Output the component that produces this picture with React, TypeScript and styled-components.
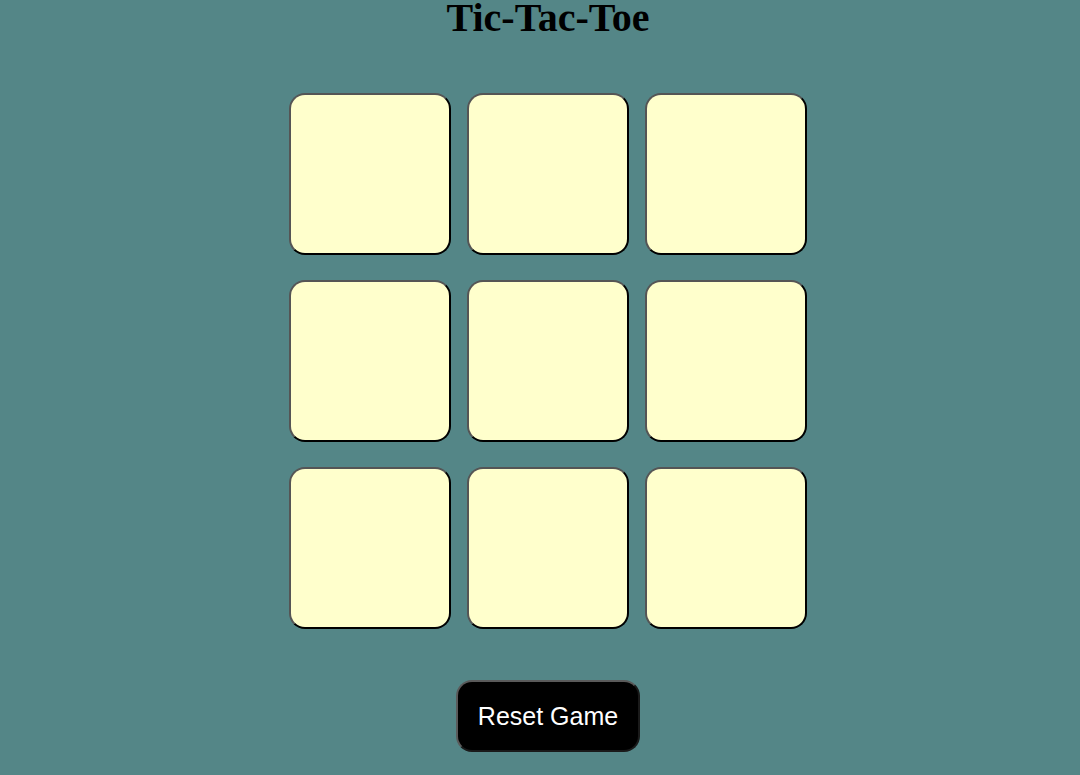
import styled, { createGlobalStyle } from "styled-components";

const GlobalStyle = createGlobalStyle`
  body {
    margin: 0;
    background: #548687;
  }
`;

const Main = styled.main`
  box-sizing: border-box;
  width: 100%;
  min-height: 100vh;
  padding-left: 16px;
  display: flex;
  flex-direction: column;
  align-items: center;
`;

const Title = styled.h1`
  margin: 0;
  font-family: "Liberation Serif", "Times New Roman", serif;
  font-size: 40px;
  line-height: 36px;
  font-weight: bold;
  color: #000;
`;

const Board = styled.div`
  margin-top: 57px;
  display: grid;
  grid-template-columns: repeat(3, 162px);
  column-gap: 16px;
  row-gap: 25px;
`;

const Cell = styled.button`
  box-sizing: border-box;
  width: 162px;
  height: 162px;
  background: #ffffcc;
  border: 2px solid;
  border-color: #555 #000 #000 #555;
  border-radius: 16px;
  cursor: pointer;
  font-family: "Liberation Sans", Arial, sans-serif;
  font-size: 80px;
`;

const ResetButton = styled.button`
  box-sizing: border-box;
  margin-top: 51px;
  width: 184px;
  height: 72px;
  background: #000;
  color: #fff;
  border: 2px solid;
  border-color: #5a5a5a #1a1a1a #1a1a1a #5a5a5a;
  border-radius: 16px;
  font-family: "Liberation Sans", Arial, sans-serif;
  font-size: 25px;
  cursor: pointer;
`;

const cells = Array.from({ length: 9 }, (_, i) => i);

const App = () => (
  <>
    <GlobalStyle />
    <Main>
      <Title>Tic-Tac-Toe</Title>
      <Board>
        {cells.map((i) => (
          <Cell key={i} />
        ))}
      </Board>
      <ResetButton>Reset Game</ResetButton>
    </Main>
  </>
);

export default App;
